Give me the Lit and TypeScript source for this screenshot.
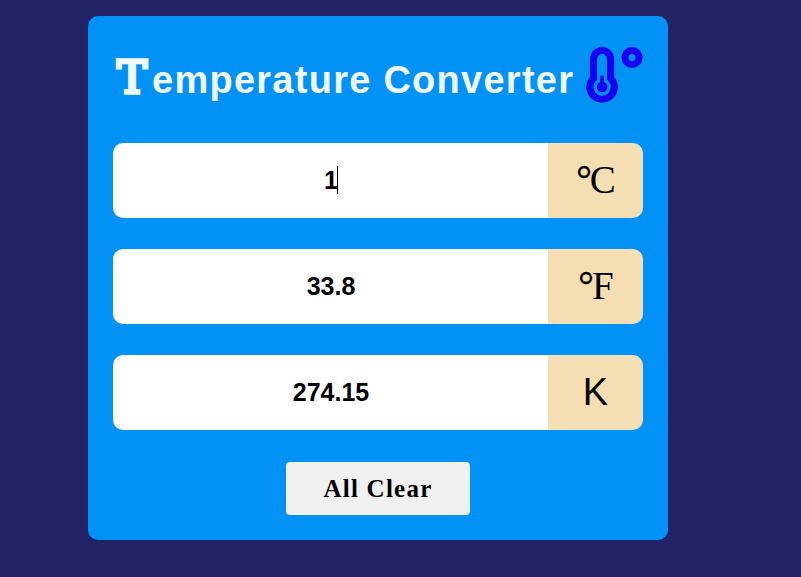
import { LitElement, html, css, svg } from "lit";
import { customElement, property } from "lit/decorators.js";

@customElement("temp-field")
class TempField extends LitElement {
  @property() value = "";
  @property() unit = "";
  @property({ type: Boolean }) degree = false;
  @property({ type: Boolean }) active = false;

  static styles = css`
    :host { display: flex; height: 75px; border-radius: 10px; overflow: hidden; }
    .value {
      flex: 1; background: #fff; display: flex; align-items: center; justify-content: center;
      font: bold 25px "Liberation Sans", Arial, sans-serif; color: #000; padding-left: 1px;
    }
    .caret { width: 1px; height: 28px; background: #000; margin: 0 0 2px -1px; }
    .unit {
      width: 95px; background: wheat; display: flex; align-items: center; justify-content: center;
      font: 38px "Liberation Sans", Arial, sans-serif; color: #000;
    }
    .serif { box-sizing: border-box; font: 39px "Liberation Serif", "Times New Roman", serif; padding: 0 0 2px 1px; }
    .deg { letter-spacing: -2px; -webkit-text-stroke: 0.4px #000; }
  `;

  render() {
    return html`
      <div class="value"><span>${this.value}</span>${this.active ? html`<span class="caret"></span>` : ""}</div>
      <div class="unit ${this.degree ? "serif" : ""}">${this.degree ? html`<span class="deg">°</span>` : ""}<span>${this.unit}</span></div>
    `;
  }
}

@customElement("app-root")
class AppRoot extends LitElement {
  static styles = css`
    :host { display: block; box-sizing: border-box; height: 577px; background: #222266; padding: 16px 0 0 88px; overflow: hidden; }
    .card { box-sizing: border-box; width: 580px; height: 524px; background: #0291f5; border-radius: 10px; padding: 0 25px; }
    .head { display: flex; height: 127px; align-items: flex-start; }
    h1 {
      margin: 0; padding-top: 33px; width: 473px; white-space: nowrap; color: aliceblue;
      font: bold 38px/58px "Liberation Sans", Arial, sans-serif; letter-spacing: 1.26px;
    }
    .initial {
      display: inline-block; width: 35px; margin-left: 4px; vertical-align: 0;
      font: 45px/58px "DejaVu Serif", serif; letter-spacing: 0;
      -webkit-text-stroke: 3.4px aliceblue; stroke-linejoin: round;
    }
    svg { width: 57px; height: 57px; margin-top: 31px; }
    .fields { display: flex; flex-direction: column; gap: 31px; }
    button {
      display: block; margin: 32px auto 0; width: 184px; height: 53px; border: 0; border-radius: 4px; padding: 0;
      background: #f0f0f0; color: #000; font: bold 25px "Liberation Serif", "Times New Roman", serif; letter-spacing: 1.25px;
    }
  `;

  render() {
    return html`
      <div class="card">
        <div class="head">
          <h1><span class="initial">T</span>emperature Converter</h1>
          ${svg`<svg viewBox="0 0 57 57" fill="none" stroke="#1a00f0">
            <path stroke-width="7" d="M7.6 31.3V12a8.5 8.5 0 0 1 17 0v19.3a12.2 12.2 0 1 1-17 0z"/>
            <circle cx="16.1" cy="40" r="5.3" fill="#1a00f0" stroke="none"/>
            <path stroke-width="3.6" stroke-linecap="round" d="M16.1 30v10"/>
            <circle cx="46" cy="10.5" r="7" stroke-width="7"/>
          </svg>`}
        </div>
        <div class="fields">
          <temp-field value="1" unit="C" degree active></temp-field>
          <temp-field value="33.8" unit="F" degree></temp-field>
          <temp-field value="274.15" unit="K"></temp-field>
        </div>
        <button>All Clear</button>
      </div>
    `;
  }
}
